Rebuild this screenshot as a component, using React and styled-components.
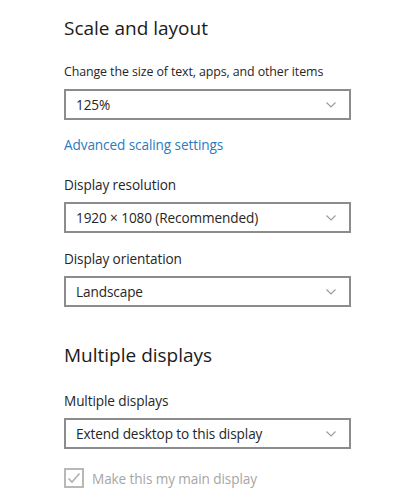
import React from "react";
import styled, { createGlobalStyle } from "styled-components";

const GlobalStyle = createGlobalStyle`
  body {
    margin: 0;
    background: #ffffff;
    font-family: "Open Sans", "Noto Sans", sans-serif;
  }
`;

const Page = styled.div`
  width: 404px;
  height: 502px;
  box-sizing: border-box;
  padding: 14px 0 0 64px;
  background: #ffffff;
`;

const Heading = styled.h2`
  margin: ${(p) => p.$top || 0}px 0 0;
  font-size: 19px;
  line-height: 28px;
  font-weight: 400;
  color: #1b1b1b;
`;

const Field = styled.div`
  display: flex;
  flex-direction: column;
  gap: 7px;
  margin-top: ${(p) => p.$top || 0}px;
  width: 287px;
`;

const Label = styled.div`
  font-size: ${(p) => p.$size || 13.6}px;
  line-height: 20px;
  color: #262626;
  white-space: nowrap;
  letter-spacing: -0.1px;
`;

const Select = styled.div`
  height: 31px;
  box-sizing: border-box;
  border: 2px solid #8c8c8c;
  display: flex;
  align-items: center;
  justify-content: space-between;
  padding: 0 12px 0 10px;
  font-size: 13.6px;
  letter-spacing: -0.1px;
  color: #262626;
`;

const Link = styled.div`
  margin-top: 15px;
  font-size: 13.6px;
  line-height: 20px;
  letter-spacing: -0.1px;
  color: #2b7bc2;
`;

const CheckRow = styled.div`
  display: flex;
  align-items: center;
  gap: 8px;
  margin-top: 19px;
`;

const Box = styled.div`
  width: 20px;
  height: 20px;
  box-sizing: border-box;
  border: 2px solid #b8b8b8;
  display: flex;
  align-items: center;
  justify-content: center;
`;

const CheckText = styled.span`
  font-size: 13.6px;
  letter-spacing: -0.1px;
  color: #a6a6a6;
`;

const Chevron = () => (
  <svg width="12" height="8" viewBox="0 0 12 8">
    <path d="M1.5 1.5 L6 6 L10.5 1.5" fill="none" stroke="#9a9a9a" strokeWidth="1.1" />
  </svg>
);

const Dropdown = ({ label, value, top, size }) => (
  <Field $top={top}>
    <Label $size={size}>{label}</Label>
    <Select>
      <span>{value}</span>
      <Chevron />
    </Select>
  </Field>
);

export default function App() {
  return (
    <>
      <GlobalStyle />
      <Page>
        <Heading>Scale and layout</Heading>
        <Dropdown
          top={20}
          size={12.4}
          label="Change the size of text, apps, and other items"
          value="125%"
        />
        <Link>Advanced scaling settings</Link>
        <Dropdown top={20} label="Display resolution" value="1920 × 1080 (Recommended)" />
        <Dropdown top={16} label="Display orientation" value="Landscape" />
        <Heading $top={34}>Multiple displays</Heading>
        <Dropdown top={22} label="Multiple displays" value="Extend desktop to this display" />
        <CheckRow>
          <Box>
            <svg width="14" height="12" viewBox="0 0 14 12">
              <path d="M1.5 6.5 L5 10 L12.5 1.5" fill="none" stroke="#b0b0b0" strokeWidth="1.6" />
            </svg>
          </Box>
          <CheckText>Make this my main display</CheckText>
        </CheckRow>
      </Page>
    </>
  );
}
